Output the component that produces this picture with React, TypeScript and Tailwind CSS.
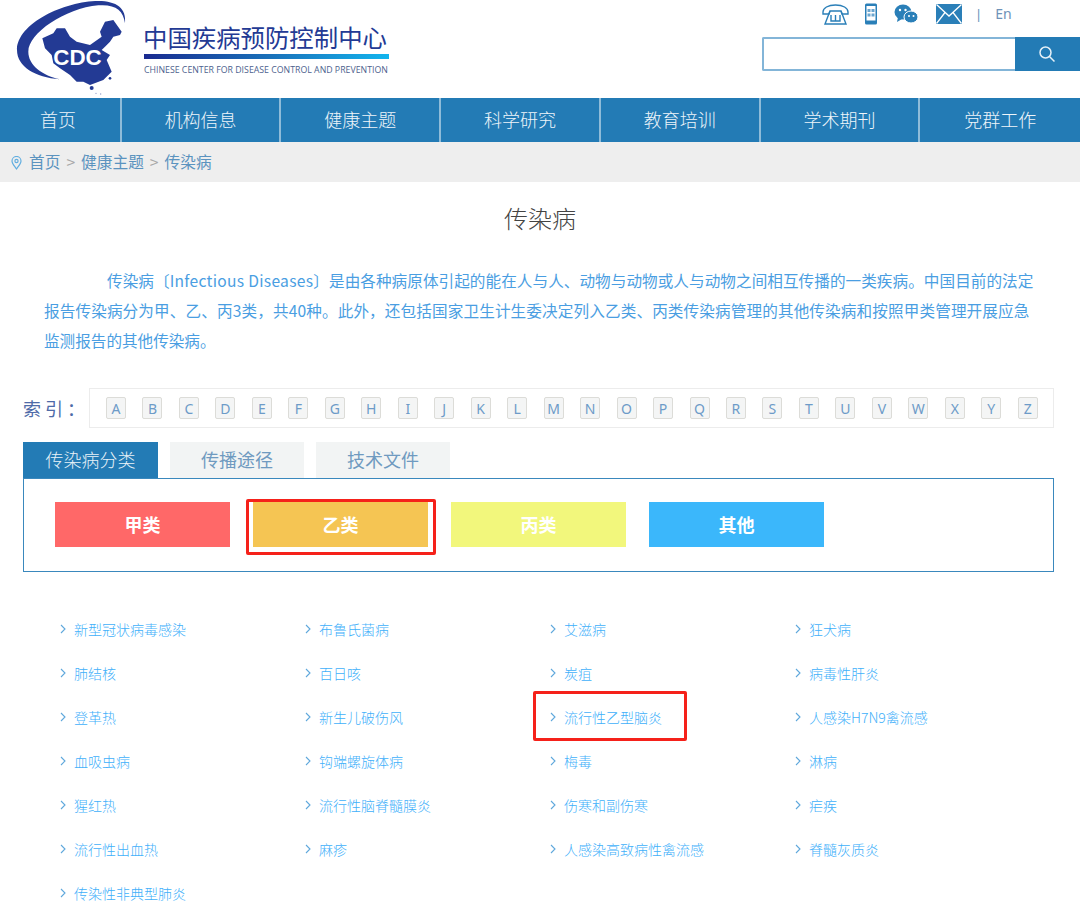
const cjk = "font-['Noto_Sans_CJK_SC','Noto_Sans',sans-serif]";

const navItems = ["首页", "机构信息", "健康主题", "科学研究", "教育培训", "学术期刊", "党群工作"];
const letters = "ABCDEFGHIJKLMNOPQRSTUVWXYZ".split("");
const diseases = [
  "新型冠状病毒感染", "布鲁氏菌病", "艾滋病", "狂犬病",
  "肺结核", "百日咳", "炭疽", "病毒性肝炎",
  "登革热", "新生儿破伤风", "流行性乙型脑炎", "人感染H7N9禽流感",
  "血吸虫病", "钩端螺旋体病", "梅毒", "淋病",
  "猩红热", "流行性脑脊髓膜炎", "伤寒和副伤寒", "疟疾",
  "流行性出血热", "麻疹", "人感染高致病性禽流感", "脊髓灰质炎",
  "传染性非典型肺炎",
];

const Logo = () => (
  <svg width="125" height="98" viewBox="0 0 375 294" className="shrink-0">
    <path
      d="M345 70 C350 25 320 3 265 3 C165 3 21 70 21 150 C21 200 75 232 150 238 C95 225 55 195 55 155 C55 100 165 25 265 16 C315 12 340 30 345 70 Z"
      fill="#233a94"
    />
    <path
      d="M97 115 L130 100 L140 85 L165 85 L180 110 L200 125 L240 135 L275 110 L270 95 L285 65 L310 60 L335 95 L330 105 L310 110 L300 125 L285 140 L275 150 L300 165 L290 180 L305 215 L280 240 L240 255 L220 245 L200 245 L180 225 L150 205 L130 190 L125 165 L105 145 Z"
      fill="#233a94"
    />
    <circle cx="245" cy="264" r="6" fill="#233a94" />
    <circle cx="300" cy="235" r="4" fill="#233a94" />
    <circle cx="258" cy="280" r="2" fill="#8f9ac8" />
    <circle cx="272" cy="282" r="2" fill="#8f9ac8" />
    <text x="130" y="195" fill="#fff" fontSize="67" fontWeight="700" fontFamily="Liberation Sans, sans-serif">CDC</text>
  </svg>
);

const TopIcons = () => (
  <div className="ml-[60px] flex h-[28px] items-center">
    <svg width="27" height="22" viewBox="0 0 27 22" fill="none" stroke="#2a7fb8" strokeWidth="1.4">
      <path d="M1 9 C1 5 6 2 13.5 2 C21 2 26 5 26 9 L26 11 L20 11 L19 8 L8 8 L7 11 L1 11 Z" />
      <path d="M8 8 L3 21 L24 21 L19 8" />
      <path d="M9 12 V18 H18 V12 M13.5 12 V18" />
    </svg>
    <svg width="14" height="22" viewBox="0 0 14 22" className="ml-[15px]">
      <rect x="1" y="0.5" width="12" height="21" rx="1.5" fill="#2a7fb8" />
      <rect x="2.5" y="3" width="9" height="14.5" fill="#fff" />
      <rect x="3.5" y="6" width="3" height="3" fill="#6ba6cf" />
      <rect x="7.5" y="6" width="3" height="3" fill="#6ba6cf" />
      <rect x="3.5" y="10.5" width="3" height="3" fill="#6ba6cf" />
      <rect x="7.5" y="10.5" width="3" height="3" fill="#6ba6cf" />
    </svg>
    <svg width="24" height="20" viewBox="0 0 24 20" className="ml-[16px]">
      <ellipse cx="9" cy="8" rx="8.5" ry="7.5" fill="#2a7fb8" />
      <path d="M4 13 L3 18 L8 15 Z" fill="#2a7fb8" />
      <circle cx="6" cy="6" r="1.2" fill="#fff" />
      <circle cx="11.5" cy="6" r="1.2" fill="#fff" />
      <ellipse cx="17" cy="13" rx="7" ry="6" fill="#2a7fb8" stroke="#fff" strokeWidth="1" />
      <circle cx="15" cy="12" r="1" fill="#fff" />
      <circle cx="19.5" cy="12" r="1" fill="#fff" />
    </svg>
    <svg width="26" height="20" viewBox="0 0 26 20" className="ml-[18px]">
      <rect width="26" height="20" fill="#2a7fb8" />
      <path d="M0.5 0.5 L13 12 L25.5 0.5 M0.5 19.5 L9 8.5 M25.5 19.5 L17 8.5" fill="none" stroke="#fff" strokeWidth="1.3" />
    </svg>
    <span className="ml-[13px] text-[13px] leading-none text-[#5b8fb8]">|</span>
    <span className="ml-[13px] font-['Noto_Sans',sans-serif] text-[14px] leading-none text-[#6e92b8]">En</span>
  </div>
);

const Header = () => (
  <header className="flex h-[98px] justify-between">
    <div className="flex pl-[10px]">
      <Logo />
      <div className="ml-[9px] w-[245px] pt-[20px]">
        <div className={`${cjk} -ml-[1px] mb-[1px] whitespace-nowrap text-[24.4px] leading-[33px] text-[#233a94]`}>中国疾病预防控制中心</div>
        <div className="h-[5px] bg-gradient-to-r from-[#1a2a90] via-[#1a6fb8] to-[#12b5ee]" />
        <div className="mt-[5px] whitespace-nowrap font-['Open_Sans',sans-serif] text-[8.77px] leading-[12px] text-[#4d5f8e]">
          CHINESE CENTER FOR DISEASE CONTROL AND PREVENTION
        </div>
      </div>
    </div>
    <div className="flex w-[318px] flex-col">
      <TopIcons />
      <div className="mt-[9px] flex h-[34px]">
        <div className="w-[253px] rounded-l-[2px] border-2 border-r-0 border-[#83b5d8] bg-white" />
        <div className="flex flex-1 items-center justify-center bg-[#237bb5] pr-[2px]">
          <svg width="18" height="18" viewBox="0 0 18 18" fill="none" stroke="#e6f1f8" strokeWidth="1.5">
            <circle cx="7.5" cy="7.5" r="5.5" />
            <path d="M11.5 11.5 L16.5 16.5" />
          </svg>
        </div>
      </div>
    </div>
  </header>
);

const Nav = () => (
  <nav className={`${cjk} flex h-[44px] bg-[#237bb5] text-[18px] font-light text-[#eef5fa]`}>
    {navItems.map((item, i) => (
      <div
        key={item}
        className={`flex items-center justify-center pb-[2px] ${i === 0 ? "w-[122px] pr-[4px]" : "w-[160px]"} ${i < navItems.length - 1 ? "border-r-2 border-[#8fbcd9]" : ""}`}
      >
        {item}
      </div>
    ))}
  </nav>
);

const Breadcrumb = () => (
  <div className={`${cjk} flex h-[40px] items-center bg-[#eeeeee] pl-[11px] text-[15.7px] text-[#5b93bf]`}>
    <svg width="11" height="14" viewBox="0 0 11 14" fill="none" stroke="#62aee0" strokeWidth="1.2" className="mt-[2px]">
      <path d="M5.5 13 C3 9.5 1 7.5 1 5 A4.5 4.5 0 0 1 10 5 C10 7.5 8 9.5 5.5 13 Z" />
      <circle cx="5.5" cy="5" r="1.6" />
    </svg>
    <span className="ml-[7px]">首页</span>
    <span className="mx-[6px] text-[#a8a8a8]">&gt;</span>
    <span>健康主题</span>
    <span className="mx-[6px] text-[#a8a8a8]">&gt;</span>
    <span>传染病</span>
  </div>
);

const Intro = () => (
  <section className={cjk}>
    <h1 className="pt-[20px] text-center text-[24px] font-light leading-[32px] text-[#444444]">传染病</h1>
    <p className="ml-[44px] mt-[31px] h-[90px] whitespace-nowrap text-[15.6px] leading-[30px] text-[#4a9ee2]">
      <span className="block pl-[63px] tracking-[0.06px]">
        传染病〔<span className="tracking-[0.3px]">Infectious Diseases</span>〕是由各种病原体引起的能在人与人、动物与动物或人与动物之间相互传播的一类疾病。中国目前的法定
      </span>
      <span className="block tracking-[0.13px]">
        报告传染病分为甲、乙、丙3类，共40种。此外，还包括国家卫生计生委决定列入乙类、丙类传染病管理的其他传染病和按照甲类管理开展应急
      </span>
      <span className="block">监测报告的其他传染病。</span>
    </p>
  </section>
);

const LetterIndex = () => (
  <div className={`${cjk} mx-[23px] mt-[33px] flex items-center`}>
    <span className="w-[66px] whitespace-nowrap text-[18px] tracking-[4px] text-[#4e6aa8]">索引：</span>
    <div className="flex h-[40px] w-[965px] items-center justify-between border border-[#ececec] pl-[16px] pr-[15px]">
      {letters.map((l) => (
        <span
          key={l}
          className="flex h-[22px] w-[20px] items-center justify-center rounded-[2px] border border-[#dcdcd8] bg-[#f4f5f5] font-['Noto_Sans',sans-serif] text-[14px] text-[#6d9bc8]"
        >
          {l}
        </span>
      ))}
    </div>
  </div>
);

const Tabs = () => (
  <div className={`${cjk} mx-[23px] mt-[14px]`}>
    <div className="flex h-[36px] gap-[12px] text-[18px]">
      <div className="flex w-[135px] items-center justify-center bg-[#237bb5] pb-[2px] font-light text-[#e8f2f8]">传染病分类</div>
      <div className="flex w-[134px] items-center justify-center bg-[#f2f4f4] pb-[2px] text-[#6f9ac0]">传播途径</div>
      <div className="flex w-[134px] items-center justify-center bg-[#f2f4f4] pb-[2px] text-[#6f9ac0]">技术文件</div>
    </div>
    <div className="relative flex h-[94px] w-[1031px] gap-[23px] border border-[#3a88bd] pl-[31px] pt-[23px] text-[18px] font-bold text-white">
      <div className="flex h-[45px] w-[175px] items-center justify-center bg-[#ff6868]">甲类</div>
      <div className="flex h-[45px] w-[175px] items-center justify-center bg-[#f5c553]">乙类</div>
      <div className="flex h-[45px] w-[175px] items-center justify-center bg-[#f2f77c]">丙类</div>
      <div className="flex h-[45px] w-[175px] items-center justify-center bg-[#3bb7fb]">其他</div>
      <div className="absolute left-[222px] top-[20px] h-[56px] w-[190px] rounded-[2px] border-[3px] border-[#f5211a]" />
    </div>
  </div>
);

const DiseaseList = () => (
  <div className="relative mt-[35px]">
    <ul className={`${cjk} grid grid-cols-[repeat(4,245px)] pl-[60px] text-[14px] font-light text-[#3fb0fa]`}>
      {diseases.map((d) => (
        <li key={d} className="flex h-[44px] items-center">
          <svg width="6" height="10" viewBox="0 0 6 10" fill="none" stroke="#5fa8dc" strokeWidth="1.1">
            <path d="M1 1 L5 5 L1 9" />
          </svg>
          <span className="ml-[8px] whitespace-nowrap">{d}</span>
        </li>
      ))}
    </ul>
    <div className="absolute left-[533px] top-[84px] h-[50px] w-[154px] rounded-[2px] border-[3px] border-[#f5211a]" />
  </div>
);

export default function App() {
  return (
    <div className="h-[912px] w-[1080px] overflow-hidden bg-white">
      <Header />
      <Nav />
      <Breadcrumb />
      <Intro />
      <LetterIndex />
      <Tabs />
      <DiseaseList />
    </div>
  );
}
